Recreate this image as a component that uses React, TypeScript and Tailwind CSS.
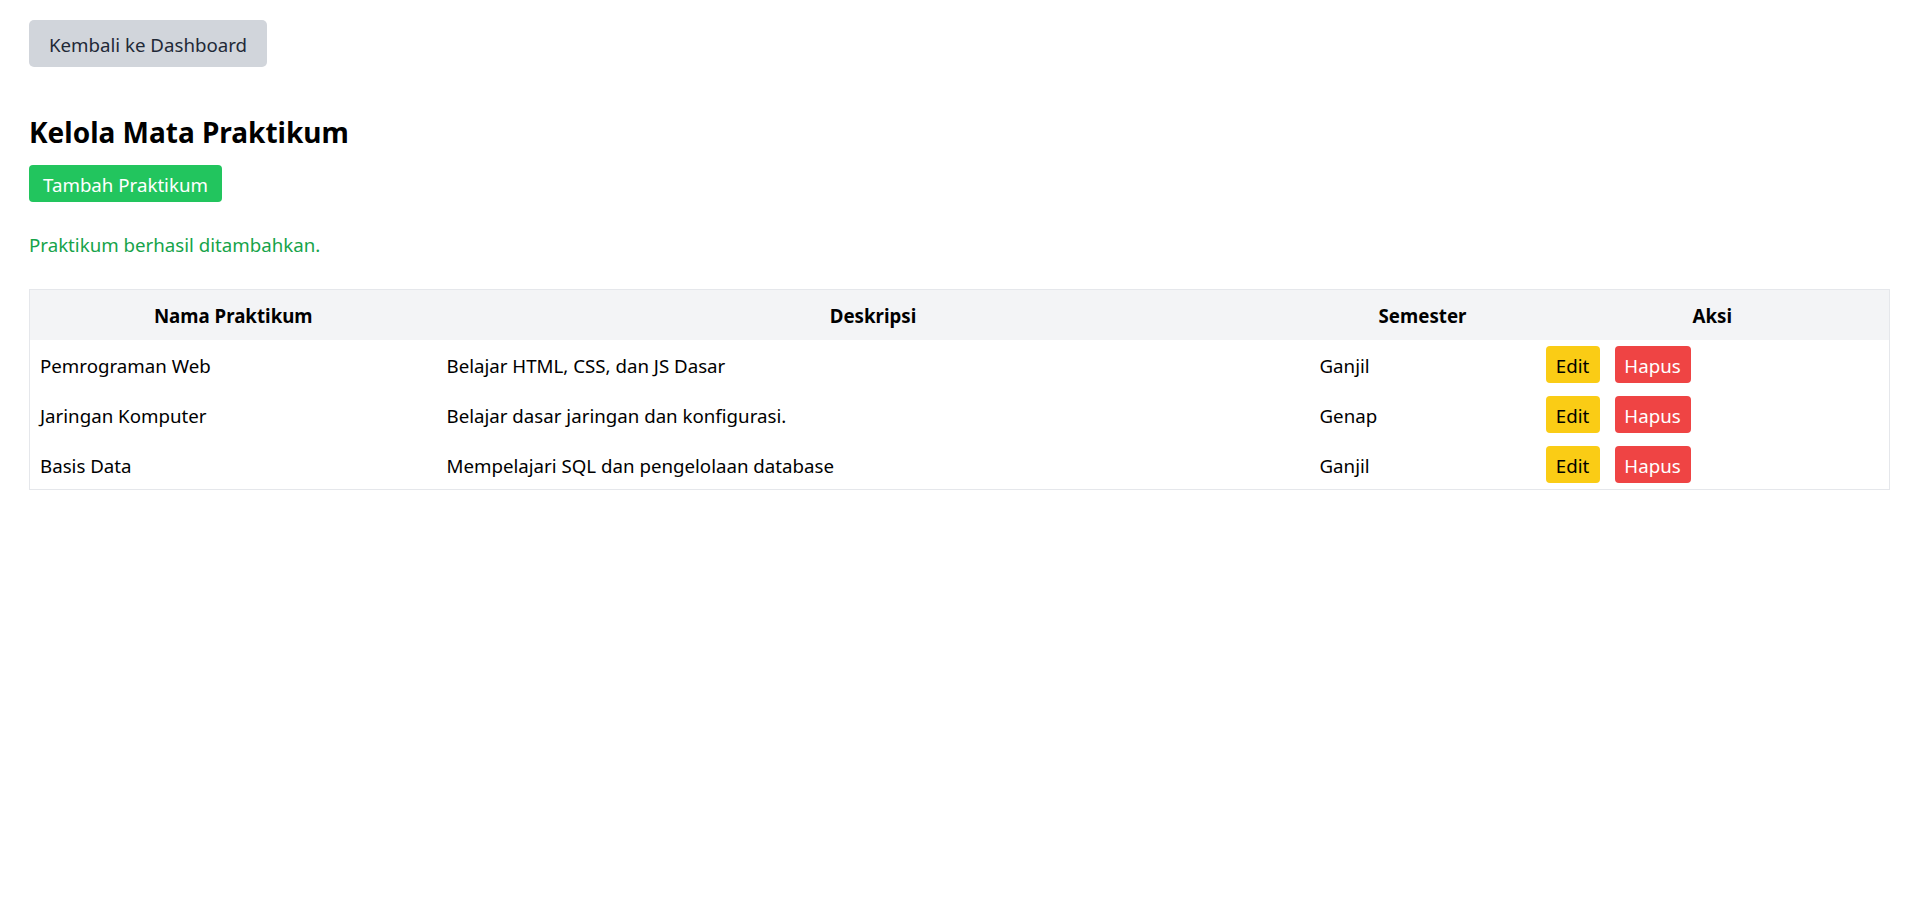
import React from "react";

const rows = [
  { nama: "Pemrograman Web", desk: "Belajar HTML, CSS, dan JS Dasar", sem: "Ganjil" },
  { nama: "Jaringan Komputer", desk: "Belajar dasar jaringan dan konfigurasi.", sem: "Genap" },
  { nama: "Basis Data", desk: "Mempelajari SQL dan pengelolaan database", sem: "Ganjil" },
];

export default function App() {
  return (
    <div
      className="min-h-screen bg-white pl-[29px] pr-[28px] pt-[20px] text-[18.7px] text-black"
      style={{ fontFamily: '"Noto Sans", "Open Sans", sans-serif' }}
    >
      <button className="flex h-[47px] w-[238px] items-center justify-center rounded-[5px] bg-[#d1d5db] pt-[3px] text-[18.7px] text-[#1f2937]">
        Kembali ke Dashboard
      </button>

      <h1 className="mt-[46px] flex h-[38px] items-center text-[28px] font-bold leading-none">
        Kelola Mata Praktikum
      </h1>

      <button className="mt-[14px] flex h-[37px] w-[193px] items-center justify-center rounded-[4px] bg-[#22c55e] pt-[3px] text-[18.7px] text-white">
        Tambah Praktikum
      </button>

      <p className="mt-[29px] flex h-[29px] items-center text-[18.7px] text-[#16a34a]">
        Praktikum berhasil ditambahkan.
      </p>

      <table className="mt-[29px] w-[1860px] table-fixed border-collapse border border-[#e5e7eb]">
        <colgroup>
          <col className="w-[407px]" />
          <col className="w-[873px]" />
          <col className="w-[226px]" />
          <col className="w-[354px]" />
        </colgroup>
        <thead>
          <tr className="h-[50px] bg-[#f3f4f6]">
            <th className="px-[10px] pt-[2px] text-center font-bold">Nama Praktikum</th>
            <th className="px-[10px] pt-[2px] text-center font-bold">Deskripsi</th>
            <th className="px-[10px] pt-[2px] text-center font-bold">Semester</th>
            <th className="px-[10px] pt-[2px] text-center font-bold">Aksi</th>
          </tr>
        </thead>
        <tbody>
          {rows.map((r) => (
            <tr key={r.nama} className="h-[50px]">
              <td className="px-[10px] pt-[3px] align-middle">{r.nama}</td>
              <td className="px-[10px] pt-[3px] align-middle">{r.desk}</td>
              <td className="px-[10px] pt-[3px] align-middle">{r.sem}</td>
              <td className="px-[10px] align-middle">
                <div className="flex items-center gap-[15px]">
                  <button className="flex h-[37px] w-[54px] items-center justify-center rounded-[4px] bg-[#facc15] pt-[3px] text-black">
                    Edit
                  </button>
                  <button className="flex h-[37px] w-[76px] items-center justify-center rounded-[4px] bg-[#ef4444] pt-[3px] text-white">
                    Hapus
                  </button>
                </div>
              </td>
            </tr>
          ))}
        </tbody>
      </table>
    </div>
  );
}
